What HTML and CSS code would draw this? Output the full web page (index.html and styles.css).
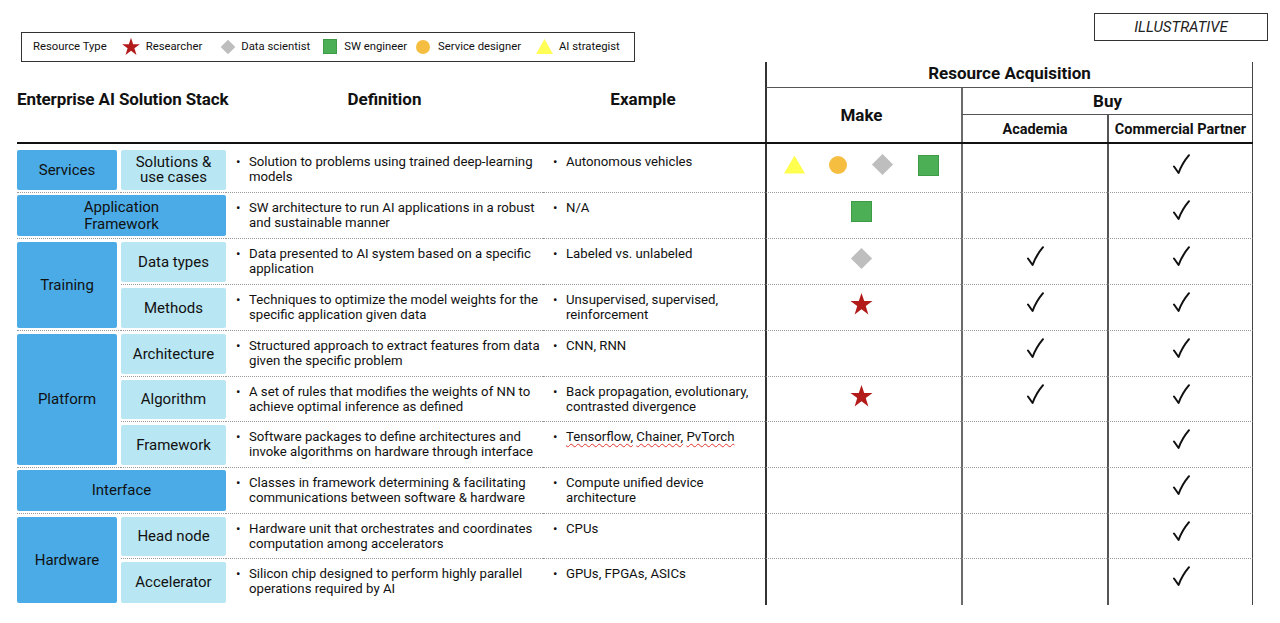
FILE: index.html
```html
<!DOCTYPE html>
<html>
<head>
<meta charset="utf-8">
<link rel="stylesheet" href="styles.css">
</head>
<body>
<div class="page">
  <div class="topbar">
    <div class="legend">
      <span class="lg-title">Resource Type</span>
      <svg class="lg-star" viewBox="0 0 24 24"><polygon points="12,1 14.6,8.6 22.6,8.6 16.1,13.4 18.6,21.5 12,16.6 5.4,21.5 7.9,13.4 1.4,8.6 9.4,8.6" fill="#b31b1b"/></svg>
      <span class="lg-label">Researcher</span>
      <svg class="lg-diamond" viewBox="0 0 24 24"><polygon points="12,1 23,12 12,23 1,12" fill="#bdbdbd"/></svg>
      <span class="lg-label">Data scientist</span>
      <svg class="lg-square" viewBox="0 0 14 15"><rect x="0.5" y="0.5" width="13" height="14" fill="#4caf55" stroke="#3d9a46"/></svg>
      <span class="lg-label">SW engineer</span>
      <svg class="lg-circle" viewBox="0 0 14 14"><circle cx="7" cy="7" r="7" fill="#f6be41"/></svg>
      <span class="lg-label">Service designer</span>
      <svg class="lg-tri" viewBox="0 0 18 16"><polygon points="9,0 18,16 0,16" fill="#ffff55"/></svg>
      <span class="lg-label">AI strategist</span>
    </div>
    <div class="illus">ILLUSTRATIVE</div>
  </div>

  <div class="head">
    <div class="h-stack">Enterprise AI Solution Stack</div>
    <div class="h-def">Definition</div>
    <div class="h-ex">Example</div>
    <div class="h-ra">Resource Acquisition</div>
    <div class="h-make">Make</div>
    <div class="h-buy">Buy</div>
    <div class="h-acad">Academia</div>
    <div class="h-comm">Commercial Partner</div>
  </div>

  <div class="body">
    <!-- row 1 -->
    <div class="c1 first"><div class="box dark">Services</div></div>
    <div class="c2 first"><div class="box light">Solutions &amp;<br>use cases</div></div>
    <div class="def first"><span class="bul">•</span><span>Solution to problems using trained deep-learning<br>models</span></div>
    <div class="ex first"><span class="bul">•</span><span>Autonomous vehicles</span></div>
    <div class="make multi first">
      <svg class="ic-tri" viewBox="0 0 22 19"><polygon points="11,0 22,19 0,19" fill="#ffff4f"/></svg>
      <svg class="ic-circle" viewBox="0 0 18 18"><circle cx="9" cy="9" r="9" fill="#f6be41"/></svg>
      <svg class="ic-diamond" viewBox="0 0 24 24"><polygon points="12,1 23,12 12,23 1,12" fill="#bebebe"/></svg>
      <svg class="ic-square" viewBox="0 0 21 21"><rect x="0.5" y="0.5" width="20" height="20" fill="#4caf55" stroke="#3d9a46"/></svg>
    </div>
    <div class="acad first"></div>
    <div class="comm first"><svg class="chk" viewBox="0 0 18 21"><path d="M2 12.5 L6.6 19 Q10 9.5 17 1.2" fill="none" stroke="#111" stroke-width="2" stroke-linecap="round" stroke-linejoin="round"/></svg></div>

    <!-- row 2 -->
    <div class="cw"><div class="box dark two">Application<br>Framework</div></div>
    <div class="def"><span class="bul">•</span><span>SW architecture to run AI applications in a robust<br>and sustainable manner</span></div>
    <div class="ex"><span class="bul">•</span><span>N/A</span></div>
    <div class="make"><svg class="ic-square" viewBox="0 0 21 21"><rect x="0.5" y="0.5" width="20" height="20" fill="#4caf55" stroke="#3d9a46"/></svg></div>
    <div class="acad"></div>
    <div class="comm"><svg class="chk" viewBox="0 0 18 21"><path d="M2 12.5 L6.6 19 Q10 9.5 17 1.2" fill="none" stroke="#111" stroke-width="2" stroke-linecap="round" stroke-linejoin="round"/></svg></div>

    <!-- row 3 -->
    <div class="c1 span2"><div class="box dark">Training</div></div>
    <div class="c2"><div class="box light">Data types</div></div>
    <div class="def"><span class="bul">•</span><span>Data presented to AI system based on a specific<br>application</span></div>
    <div class="ex"><span class="bul">•</span><span>Labeled vs. unlabeled</span></div>
    <div class="make"><svg class="ic-diamond low" viewBox="0 0 24 24"><polygon points="12,1 23,12 12,23 1,12" fill="#bebebe"/></svg></div>
    <div class="acad"><svg class="chk" viewBox="0 0 18 21"><path d="M2 12.5 L6.6 19 Q10 9.5 17 1.2" fill="none" stroke="#111" stroke-width="2" stroke-linecap="round" stroke-linejoin="round"/></svg></div>
    <div class="comm"><svg class="chk" viewBox="0 0 18 21"><path d="M2 12.5 L6.6 19 Q10 9.5 17 1.2" fill="none" stroke="#111" stroke-width="2" stroke-linecap="round" stroke-linejoin="round"/></svg></div>

    <!-- row 4 -->
    <div class="c2"><div class="box light">Methods</div></div>
    <div class="def"><span class="bul">•</span><span>Techniques to optimize the model weights for the<br>specific application given data</span></div>
    <div class="ex"><span class="bul">•</span><span>Unsupervised, supervised,<br>reinforcement</span></div>
    <div class="make"><svg class="ic-star" viewBox="0 0 24 24"><polygon points="12,1 14.6,8.6 22.6,8.6 16.1,13.4 18.6,21.5 12,16.6 5.4,21.5 7.9,13.4 1.4,8.6 9.4,8.6" fill="#b31b1b"/></svg></div>
    <div class="acad"><svg class="chk" viewBox="0 0 18 21"><path d="M2 12.5 L6.6 19 Q10 9.5 17 1.2" fill="none" stroke="#111" stroke-width="2" stroke-linecap="round" stroke-linejoin="round"/></svg></div>
    <div class="comm"><svg class="chk" viewBox="0 0 18 21"><path d="M2 12.5 L6.6 19 Q10 9.5 17 1.2" fill="none" stroke="#111" stroke-width="2" stroke-linecap="round" stroke-linejoin="round"/></svg></div>

    <!-- row 5 -->
    <div class="c1 span3"><div class="box dark">Platform</div></div>
    <div class="c2"><div class="box light">Architecture</div></div>
    <div class="def"><span class="bul">•</span><span>Structured approach to extract features from data<br>given the specific problem</span></div>
    <div class="ex"><span class="bul">•</span><span>CNN, RNN</span></div>
    <div class="make"></div>
    <div class="acad"><svg class="chk" viewBox="0 0 18 21"><path d="M2 12.5 L6.6 19 Q10 9.5 17 1.2" fill="none" stroke="#111" stroke-width="2" stroke-linecap="round" stroke-linejoin="round"/></svg></div>
    <div class="comm"><svg class="chk" viewBox="0 0 18 21"><path d="M2 12.5 L6.6 19 Q10 9.5 17 1.2" fill="none" stroke="#111" stroke-width="2" stroke-linecap="round" stroke-linejoin="round"/></svg></div>

    <!-- row 6 -->
    <div class="c2"><div class="box light">Algorithm</div></div>
    <div class="def"><span class="bul">•</span><span>A set of rules that modifies the weights of NN to<br>achieve optimal inference as defined</span></div>
    <div class="ex"><span class="bul">•</span><span>Back propagation, evolutionary,<br>contrasted divergence</span></div>
    <div class="make"><svg class="ic-star" viewBox="0 0 24 24"><polygon points="12,1 14.6,8.6 22.6,8.6 16.1,13.4 18.6,21.5 12,16.6 5.4,21.5 7.9,13.4 1.4,8.6 9.4,8.6" fill="#b31b1b"/></svg></div>
    <div class="acad"><svg class="chk" viewBox="0 0 18 21"><path d="M2 12.5 L6.6 19 Q10 9.5 17 1.2" fill="none" stroke="#111" stroke-width="2" stroke-linecap="round" stroke-linejoin="round"/></svg></div>
    <div class="comm"><svg class="chk" viewBox="0 0 18 21"><path d="M2 12.5 L6.6 19 Q10 9.5 17 1.2" fill="none" stroke="#111" stroke-width="2" stroke-linecap="round" stroke-linejoin="round"/></svg></div>

    <!-- row 7 -->
    <div class="c2"><div class="box light">Framework</div></div>
    <div class="def"><span class="bul">•</span><span>Software packages to define architectures and<br>invoke algorithms on hardware through interface</span></div>
    <div class="ex"><span class="bul">•</span><span><span class="sq">Tensorflow,</span> <span class="sq">Chainer,</span> <span class="sq">PvTorch</span></span></div>
    <div class="make"></div>
    <div class="acad"></div>
    <div class="comm"><svg class="chk" viewBox="0 0 18 21"><path d="M2 12.5 L6.6 19 Q10 9.5 17 1.2" fill="none" stroke="#111" stroke-width="2" stroke-linecap="round" stroke-linejoin="round"/></svg></div>

    <!-- row 8 -->
    <div class="cw"><div class="box dark">Interface</div></div>
    <div class="def"><span class="bul">•</span><span>Classes in framework determining &amp; facilitating<br>communications between software &amp; hardware</span></div>
    <div class="ex"><span class="bul">•</span><span>Compute unified device<br>architecture</span></div>
    <div class="make"></div>
    <div class="acad"></div>
    <div class="comm"><svg class="chk" viewBox="0 0 18 21"><path d="M2 12.5 L6.6 19 Q10 9.5 17 1.2" fill="none" stroke="#111" stroke-width="2" stroke-linecap="round" stroke-linejoin="round"/></svg></div>

    <!-- row 9 -->
    <div class="c1 span2 end"><div class="box dark">Hardware</div></div>
    <div class="c2"><div class="box light">Head node</div></div>
    <div class="def"><span class="bul">•</span><span>Hardware unit that orchestrates and coordinates<br>computation among accelerators</span></div>
    <div class="ex"><span class="bul">•</span><span>CPUs</span></div>
    <div class="make"></div>
    <div class="acad"></div>
    <div class="comm"><svg class="chk" viewBox="0 0 18 21"><path d="M2 12.5 L6.6 19 Q10 9.5 17 1.2" fill="none" stroke="#111" stroke-width="2" stroke-linecap="round" stroke-linejoin="round"/></svg></div>

    <!-- row 10 -->
    <div class="c2 end"><div class="box light">Accelerator</div></div>
    <div class="def end"><span class="bul">•</span><span>Silicon chip designed to perform highly parallel<br>operations required by AI</span></div>
    <div class="ex end"><span class="bul">•</span><span>GPUs, FPGAs, ASICs</span></div>
    <div class="make end"></div>
    <div class="acad end"></div>
    <div class="comm end"><svg class="chk" viewBox="0 0 18 21"><path d="M2 12.5 L6.6 19 Q10 9.5 17 1.2" fill="none" stroke="#111" stroke-width="2" stroke-linecap="round" stroke-linejoin="round"/></svg></div>
  </div>
</div>
</body>
</html>
```

FILE: styles.css
```css
* { box-sizing: border-box; }
html, body { margin: 0; padding: 0; background: #fff; }
body {
  font-family: Roboto, "Liberation Sans", Arial, sans-serif;
  color: #111;
  width: 1280px;
  height: 623px;
  overflow: hidden;
}
.page { width: 1280px; }

/* ---------- top bar ---------- */
.topbar {
  display: flex;
  justify-content: space-between;
  align-items: flex-start;
  height: 62px;
}
.legend {
  margin-top: 32px;
  margin-left: 21px;
  width: 614px;
  height: 30px;
  border: 1px solid #333;
  display: flex;
  align-items: center;
  padding-left: 11px;
  padding-bottom: 1px;
  font-size: 11.3px;
  color: #111;
}
.lg-title { margin-right: 14px; }
.lg-star { width: 20px; height: 20px; margin-right: 5px; }
.lg-diamond { width: 16px; height: 16px; margin-left: 18px; margin-right: 5px; }
.lg-square { width: 14px; height: 15px; margin-left: 13px; margin-right: 7px; }
.lg-circle { width: 14px; height: 14px; margin-left: 9px; margin-right: 8px; }
.lg-tri { width: 17px; height: 15px; margin-left: 15px; margin-right: 6px; }

.illus {
  margin-top: 13px;
  margin-right: 12px;
  width: 174px;
  height: 28px;
  border: 1px solid #333;
  display: flex;
  align-items: center;
  justify-content: center;
  font-style: italic;
  font-size: 15px;
  color: #222;
}

/* ---------- grid columns ---------- */
.head, .body {
  margin-left: 17px;
  width: 1236px;
  display: grid;
  grid-template-columns: 104px 105px 317px 222px 196px 146px 146px;
}

/* ---------- header ---------- */
.head {
  grid-template-rows: 26px 27px 27px;
  border-bottom: 2px solid #111;
  font-weight: 700;
}
.head > div {
  display: flex;
  align-items: center;
  justify-content: center;
}
.h-stack {
  grid-column: 1 / 3;
  grid-row: 1 / 4;
  justify-content: flex-start !important;
  font-size: 17px;
  padding-bottom: 6px;
  letter-spacing: -0.1px;
  white-space: nowrap;
}
.h-def { grid-column: 3; grid-row: 1 / 4; font-size: 17px; padding-bottom: 6px; }
.h-ex { grid-column: 4; grid-row: 1 / 4; font-size: 17px; padding-bottom: 6px; padding-right: 22px; }
.h-ra {
  grid-column: 5 / 8;
  grid-row: 1;
  font-size: 17px;
  border-left: 2px solid #333;
  border-right: 1px solid #444;
  border-bottom: 1px solid #555;
  padding-bottom: 4px;
}
.h-make {
  grid-column: 5;
  grid-row: 2 / 4;
  font-size: 17px;
  border-left: 2px solid #333;
  padding-right: 5px;
}
.h-buy {
  grid-column: 6 / 8;
  grid-row: 2;
  font-size: 17px;
  border-left: 2px solid #6b6b6b;
  border-right: 1px solid #444;
  border-bottom: 1px solid #555;
  padding-bottom: 1px;
}
.h-acad {
  grid-column: 6;
  grid-row: 3;
  font-size: 14.5px;
  border-left: 2px solid #6b6b6b;
  padding-top: 1px;
}
.h-comm {
  grid-column: 7;
  grid-row: 3;
  font-size: 14.5px;
  border-left: 2px solid #555;
  border-right: 1px solid #444;
  padding-top: 1px;
}

/* ---------- body ---------- */
.body {
  grid-template-rows: 49px 46px 46px 46px 46px 45px 46px 46px 45px 46px;
  font-size: 13.2px;
}
.body > div {
  border-bottom: 1px dotted #9a9a9a;
}
.body > div.end { border-bottom: none; }

.c1 { padding: 3px 4px 2px 0; }
.c2 { padding: 3px 0 2px 0; }
.cw { grid-column: 1 / 3; padding: 2px 0 2px 0; }
.c1.first, .c2.first { padding-top: 6px; }
.span2 { grid-row: span 2; }
.span3 { grid-row: span 3; }

.box {
  height: 100%;
  border-radius: 2px;
  display: flex;
  align-items: center;
  justify-content: center;
  text-align: center;
  font-size: 15px;
  line-height: 15px;
  color: #111;
}
.box.two { line-height: 17px; }
.dark { background: #4aabe7; }
.light { background: #b8e6f2; }

.def, .ex {
  display: flex;
  align-items: flex-start;
  padding-left: 10px;
  padding-top: 7px;
  line-height: 15px;
  white-space: nowrap;
  color: #111;
}
.def.first, .ex.first { padding-top: 10px; }
.bul { width: 13px; flex: none; }
.sq {
  text-decoration: underline wavy #e0342f;
  text-decoration-thickness: 1px;
  text-underline-offset: 2px;
}

.make, .acad, .comm {
  display: flex;
  justify-content: center;
  align-items: flex-start;
  padding-top: 7px;
}
.make.first, .acad.first, .comm.first { padding-top: 10px; }
.make { border-left: 2px solid #333; gap: 24px; padding-right: 5px; }
.acad { border-left: 2px solid #6b6b6b; }
.comm { border-left: 2px solid #555; border-right: 1px solid #444; }

.ic-tri { width: 21px; height: 19px; margin-top: 1px; }
.ic-circle { width: 18px; height: 18px; margin-top: 2px; }
.ic-diamond { width: 23px; height: 23px; margin-top: -1px; }
.ic-diamond.low { margin-top: 1px; }
.ic-square { width: 21px; height: 21px; margin-top: 1px; }
.ic-star { width: 25px; height: 25px; }

.chk { width: 18px; height: 21px; }
```
